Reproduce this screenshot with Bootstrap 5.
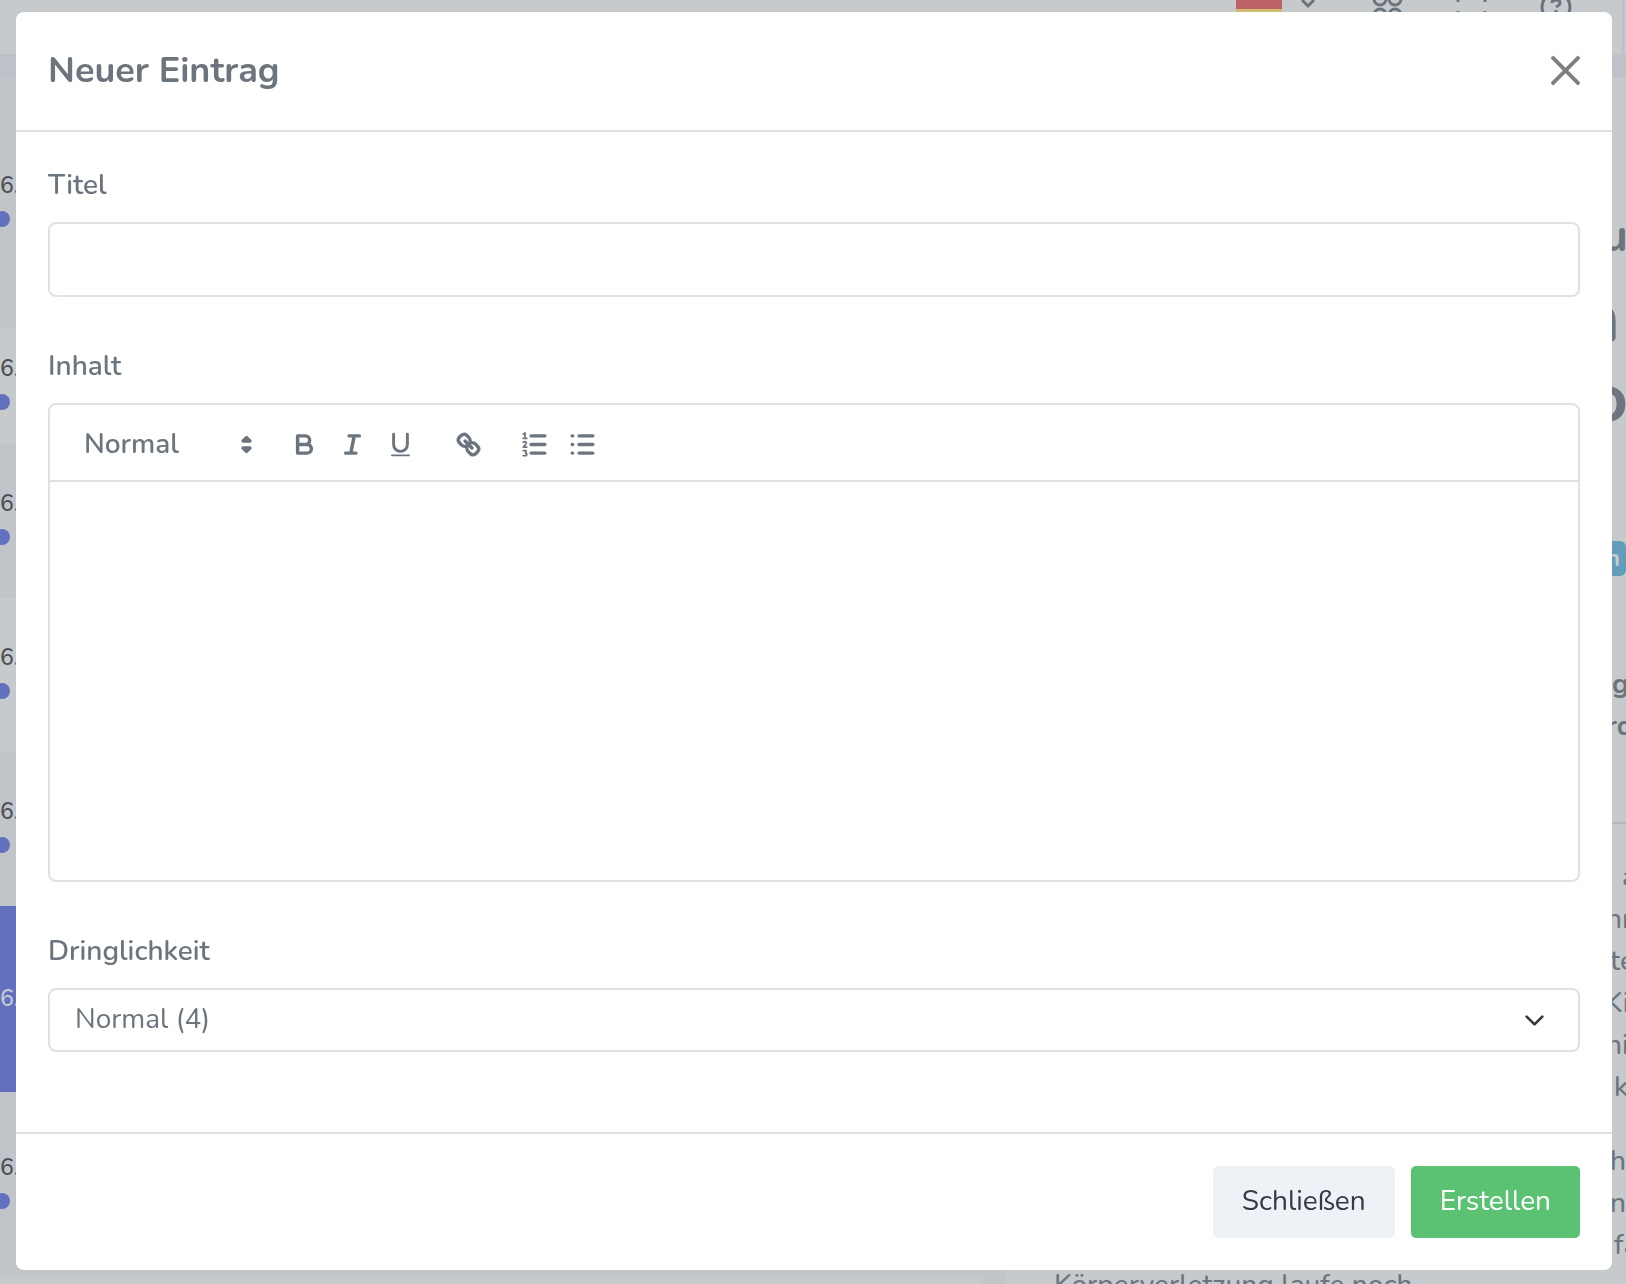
<!DOCTYPE html>
<html lang="de">
<head>
<meta charset="utf-8">
<meta name="viewport" content="width=device-width, initial-scale=1">
<title>Neuer Eintrag</title>
<link href="https://cdn.jsdelivr.net/npm/bootstrap@5.3.0/dist/css/bootstrap.min.css" rel="stylesheet">
<style>
  :root { --ink: #6c757d; --line: #dee2e6; --page: #c7cacd; --shade: #c1c4c9; --accent: #6270bd; }
  body { font-family: Nunito, Lato, "Open Sans", sans-serif; font-size: 28px; line-height: 42px; color: var(--ink); background: var(--page); }

  /* dimmed page behind the dialog */
  .app-page { height: 100vh; overflow: hidden; }
  .topbar { height: 54px; padding-right: 2px; }
  .topbar-icons { border-right: 2px solid #bcbfcb; padding-right: 50px; }
  .topbar-icons svg { display: block; fill: none; stroke: var(--ink); stroke-width: 3; }
  .under-bar { height: 24px; background: #bec1c8; }
  .mail-list { width: 982px; }
  .mail-item { height: 154px; padding-bottom: 8px; line-height: 28px; font-size: 23px; font-weight: 500; color: #495057; gap: 11px; }
  .mail-item:nth-child(odd) { background: var(--shade); }
  .mail-item.tall { height: 250px; }
  .mail-item.low { height: 116px; }
  .mail-item.mid { height: 185px; padding-bottom: 6px; }
  .mail-item.current { height: 186px; padding-bottom: 0; background: var(--accent); color: #c7cad0; }
  .unread { width: 16px; height: 16px; margin-left: -6px; border-radius: 50%; background: var(--accent); }
  .gutter { width: 24px; background: var(--shade); }
  .quote-text { padding-left: 48px; font-weight: 500; }
  .quote-text > div { margin-bottom: -22px; }
  .detail { width: 22px; margin-right: -2px; white-space: nowrap; font-weight: 500; }
  .detail-title { font-size: 46px; line-height: 84px; padding-top: 116px; }
  .detail-name { font-size: 70px; line-height: 80px; }
  .tag { height: 35px; border-radius: 6px; background: #639dba; color: #c7cad0; font-size: 24px; font-weight: 700; line-height: 35px; margin: 103px 2px 87px 0; }
  .detail-rule { height: 2px; background: #b5b9bd; margin: 75px 0 32px; }

  /* dialog */
  .entry-dialog { max-width: none; margin: 12px 14px 12px 16px; }
  .entry-dialog .modal-content { border: 0; border-radius: 8px; color: var(--ink); }
  .entry-dialog .modal-header { padding: 32px 31px 32px 32px; border-bottom: 2px solid var(--line); align-items: flex-start; }
  .entry-dialog .modal-title { font-size: 36px; line-height: 54px; font-weight: 700; }
  .entry-dialog .btn-close { width: 31px; height: 31px; padding: 0; margin: 11px 0 0; background-size: 31px; }
  .entry-dialog .modal-body { padding: 32px; }
  .entry-dialog .modal-footer { padding: 32px; gap: 16px; border-top: 2px solid var(--line); }
  .entry-dialog .modal-footer > * { margin: 0; }
  .field { margin-bottom: 48px; }
  .form-label { display: block; margin-bottom: 16px; font-weight: 600; }
  .form-control, .form-select { border: 2px solid var(--line); border-radius: 8px; font-size: 28px; color: var(--ink); }
  .form-control { height: 75px; }
  .form-select.urgency { height: 64px; padding: 0 80px 2px 25px; background-size: 21px; background-position: right 33px center; }
  .editor { border: 2px solid var(--line); border-radius: 8px; }
  .editor-bar { height: 77px; padding: 3px 16px 0; border-bottom: 2px solid var(--line); }
  .form-select.format { width: 194px; height: 48px; padding: 0 32px 0 18px; border: 0; line-height: 48px; font-weight: 600; margin-right: 20px;
    background-image: url("data:image/svg+xml,%3Csvg xmlns='http://www.w3.org/2000/svg' viewBox='0 0 18 18'%3E%3Cpath fill='%236c757d' stroke='%236c757d' stroke-width='2' stroke-linejoin='round' d='M7 11L9 13L11 11ZM7 7L9 5L11 7Z'/%3E%3C/svg%3E");
    background-size: 31px; background-position: right -2px center; }
  .tool { width: 48px; height: 48px; padding: 8px 8px 8px 9px; border: 0; background: none; color: var(--ink); }
  .tool svg { display: block; width: 31px; height: 31px; fill: none; stroke: currentColor; stroke-width: 2; stroke-linecap: round; stroke-linejoin: round; }
  .link-tool { margin: 0 18px 0 20px; }
  .editor-area { height: 398px; padding: 24px 32px; outline: 0; }
  .action { height: 72px; padding: 0 29px 2px; border: 0; border-radius: 5px; font-size: 28px; line-height: 42px; }
  .action-close, .action-close:hover { background: #eef2f7; color: #323a46; }
  .action-create, .action-create:hover { background: #5bc273; color: #fff; }
</style>
<script src="https://cdn.jsdelivr.net/npm/bootstrap@5.3.0/dist/js/bootstrap.bundle.min.js"></script>
</head>
<body>
<div class="app-page d-flex flex-column" aria-hidden="true">
  <header class="topbar d-flex justify-content-end flex-shrink-0">
    <div class="topbar-icons d-flex align-items-start">
      <svg width="46" height="24"><path stroke="none" fill="#bd6368" d="M0 0h46v9H0z"/><path stroke="none" fill="#cdbd70" d="M0 9h46v15H0z"/></svg>
      <svg width="90" height="24"><path d="M20 0l6 6 6-6"/></svg>
      <svg width="34" height="24"><circle cx="8" cy="-1" r="6"/><circle cx="23" cy="-1" r="6"/><circle cx="8" cy="15" r="6"/><circle cx="23" cy="15" r="6"/></svg>
      <svg width="134" height="24"><path d="M52 0v2M79 0v2M52 11v8M79 11v8"/></svg>
      <svg width="32" height="24"><circle cx="16" cy="7" r="14"/><path d="M12 3q0-3 4-3t4 3q0 2-4 4M16 10v2"/></svg>
    </div>
  </header>
  <div class="under-bar flex-shrink-0"></div>
  <div class="d-flex flex-grow-1">
    <div class="mail-list flex-shrink-0">
      <div class="mail-item tall d-flex flex-column justify-content-center"><span>6.</span><i class="unread"></i></div>
      <div class="mail-item low d-flex flex-column justify-content-center"><span>6.</span><i class="unread"></i></div>
      <div class="mail-item d-flex flex-column justify-content-center"><span>6.</span><i class="unread"></i></div>
      <div class="mail-item d-flex flex-column justify-content-center"><span>6.</span><i class="unread"></i></div>
      <div class="mail-item d-flex flex-column justify-content-center"><span>6.</span><i class="unread"></i></div>
      <div class="mail-item current d-flex flex-column justify-content-center"><span>6.</span></div>
      <div class="mail-item mid d-flex flex-column justify-content-center"><span>6.</span><i class="unread"></i></div>
    </div>
    <div class="gutter flex-shrink-0"></div>
    <div class="quote-text flex-grow-1 d-flex flex-column justify-content-end"><div class="text-nowrap">Körperverletzung laufe noch</div></div>
    <div class="detail flex-shrink-0">
      <div class="detail-title fw-bold d-flex justify-content-end">u</div>
      <div class="detail-name fw-bold d-flex justify-content-end pe-2">n</div>
      <div class="detail-name fw-bold d-flex justify-content-end">o</div>
      <div class="tag text-end pe-2">n</div>
      <div class="fw-bold d-flex justify-content-center">ig</div>
      <div class="fw-bold">rd</div>
      <div class="detail-rule"></div>
      <div class="ps-3">a</div>
      <div>nn</div>
      <div class="ps-1">te</div>
      <div class="d-flex justify-content-center">Ki</div>
      <div>ni</div>
      <div class="ps-2">k</div>
      <div class="ps-1 mt-4 pt-2">h</div>
      <div class="ps-1">n</div>
      <div class="ps-2">fa</div>
    </div>
  </div>
</div>

<div class="modal show d-block" tabindex="-1" role="dialog" aria-modal="true" aria-labelledby="entry-title">
  <div class="modal-dialog entry-dialog">
    <form class="modal-content" onsubmit="return false">
      <div class="modal-header justify-content-between">
        <h1 class="modal-title" id="entry-title">Neuer Eintrag</h1>
        <button type="button" class="btn-close" aria-label="Schließen"></button>
      </div>
      <div class="modal-body">
        <div class="field">
          <label class="form-label" for="entry-name">Titel</label>
          <input class="form-control" id="entry-name" type="text">
        </div>
        <div class="field">
          <label class="form-label" id="content-label" for="content">Inhalt</label>
          <div class="editor">
            <div class="editor-bar d-flex align-items-center" role="toolbar">
              <select class="form-select format" aria-label="Absatzformat"><option>Normal</option></select>
              <button type="button" class="tool" aria-label="Fett"><svg viewBox="0 0 18 18"><path d="M5 4h4.500a2.500 2.500 0 0 1 0 5H5zM5 9h5.500a2.500 2.500 0 0 1 0 5H5z"/></svg></button>
              <button type="button" class="tool" aria-label="Kursiv"><svg viewBox="0 0 18 18"><path d="M7 4h6M5 14h6M8 14l2-10"/></svg></button>
              <button type="button" class="tool" aria-label="Unterstrichen"><svg viewBox="0 0 18 18"><path stroke-width="1.700" d="M5 3v6a4 4 0 0 0 8 0V3"/><path stroke-width="1" d="M4 15.300h10"/></svg></button>
              <button type="button" class="tool link-tool" aria-label="Link"><svg viewBox="0 0 18 18"><path d="M7 7l4 4M8.900 4.577a3.476 3.476 0 0 1 .36 4.679A3.476 3.476 0 0 1 4.577 8.900C3.185 7.500 2.035 6.400 4.217 4.217S7.500 3.185 8.900 4.577zM13.423 9.100a3.476 3.476 0 0 0-4.679-.36 3.476 3.476 0 0 0 .36 4.679c1.392 1.392 2.500 2.542 4.679.36s1.031-3.287-.36-4.679z"/></svg></button>
              <button type="button" class="tool" aria-label="Nummerierte Liste"><svg viewBox="0 0 18 18"><path d="M7 4h8M7 9h8M7 14h8"/><path stroke-width="1" d="M2.500 3l1-.7v3.200M2.500 5.500h2M2.500 7.700q1-.7 1.700 0 .4.700-1.700 2.800h2M2.500 12.500h1.200q1 .2 0 1.400 1.500.4.500 1.600H2.500"/></svg></button>
              <button type="button" class="tool" aria-label="Aufzählung"><svg viewBox="0 0 18 18"><path d="M7 4h8M7 9h8M7 14h8M3 4h.3M3 9h.3M3 14h.3"/></svg></button>
            </div>
            <div class="editor-area" id="content" contenteditable="true" role="textbox" aria-multiline="true" aria-labelledby="content-label"></div>
          </div>
        </div>
        <div class="field">
          <label class="form-label" for="urgency">Dringlichkeit</label>
          <select class="form-select urgency" id="urgency"><option>Normal (4)</option></select>
        </div>
      </div>
      <div class="modal-footer">
        <button type="button" class="btn action action-close">Schließen</button>
        <button type="submit" class="btn action action-create">Erstellen</button>
      </div>
    </form>
  </div>
</div>
</body>
</html>
